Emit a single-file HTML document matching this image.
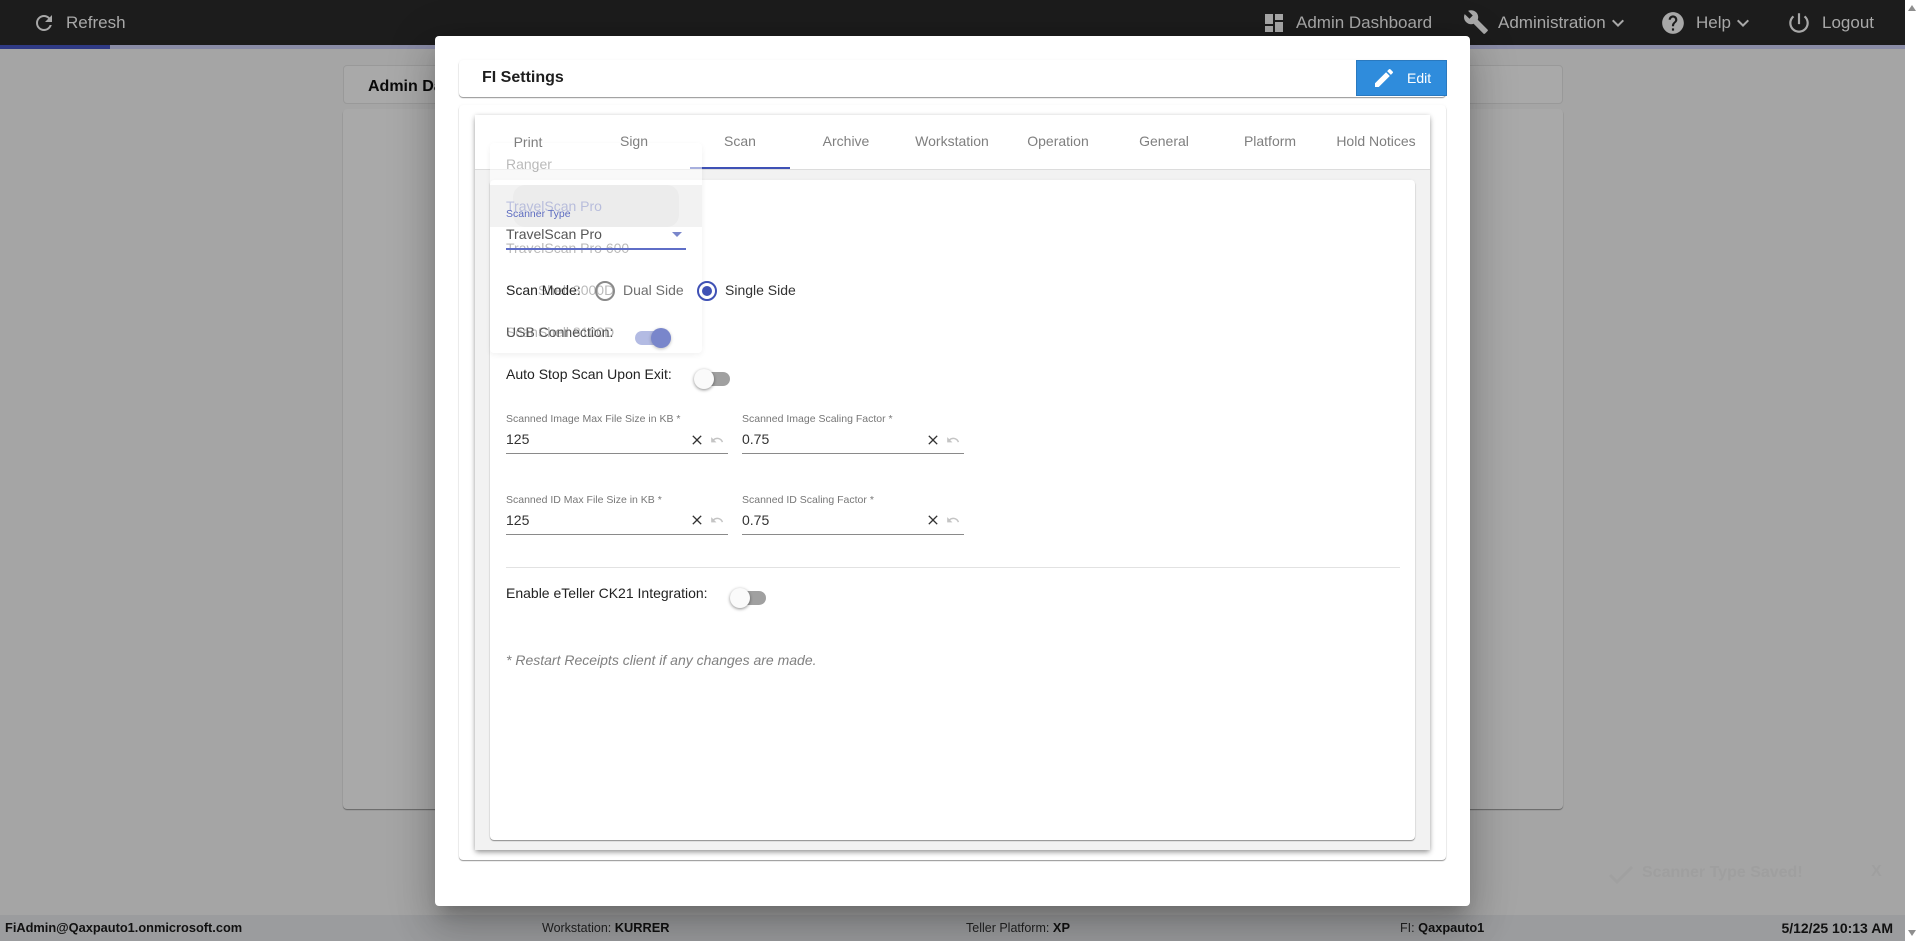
<!DOCTYPE html>
<html><head><meta charset="utf-8"><title>FI Settings</title>
<style>
html,body{margin:0;padding:0;width:1920px;height:941px;overflow:hidden;background:#fff;font-family:"Liberation Sans",Arial,sans-serif}
*{box-sizing:border-box}
.a{position:absolute}
.t{position:absolute;line-height:20px;white-space:nowrap;height:20px}
svg{position:absolute;display:block}
.nav{font-size:17px;color:#a8a8a8}
.tab{position:absolute;top:131px;width:106px;text-align:center;font-size:14px;line-height:20px;color:#7f7f7f}
.lab{font-size:10.5px;color:#777}
.val{font-size:14px;color:#333}
.line{position:absolute;height:1px;background:#8a8a8a;width:222px}
.st{font-size:12.8px;color:#111;font-weight:bold}
.st span{font-weight:normal;color:#222;font-size:12.5px}
.dd{font-size:14px;color:rgba(0,0,0,.28)}
</style></head>
<body>
<div class="a" style="left:0;top:0;width:1905px;height:941px;background:#a5a5a5;overflow:hidden">
  <div class="a" style="left:0;top:0;width:1905px;height:45px;background:#1c1c1c"></div>
  <div class="a" style="left:0;top:45px;width:1905px;height:4px;background:#8a8ca6"></div>
  <div class="a" style="left:0;top:45px;width:110px;height:4px;background:#2f3a85"></div>

  <svg style="left:32px;top:11px" width="24" height="24" viewBox="0 0 24 24" fill="#a8a8a8"><path d="M17.65 6.35C16.2 4.9 14.21 4 12 4c-4.42 0-7.99 3.58-7.99 8s3.57 8 7.99 8c3.73 0 6.84-2.55 7.73-6h-2.08c-.82 2.33-3.04 4-5.65 4-3.31 0-6-2.69-6-6s2.69-6 6-6c1.66 0 3.14.69 4.22 1.78L13 11h7V4l-2.35 2.35z"/></svg>
  <div class="t nav" style="left:66px;top:13px">Refresh</div>

  <svg style="left:1262px;top:11px" width="24" height="24" viewBox="0 0 24 24" fill="#a8a8a8"><path d="M3 13h8V3H3v10zm0 8h8v-6H3v6zm10 0h8V11h-8v10zm0-18v6h8V3h-8z"/></svg>
  <div class="t nav" style="left:1296px;top:13px">Admin Dashboard</div>
  <svg style="left:1463px;top:9px" width="26" height="26" viewBox="0 0 24 24" fill="#a8a8a8"><path d="M22.7 19l-9.1-9.1c.9-2.3.4-5-1.5-6.9-2-2-5-2.4-7.4-1.3L9 6 6 9 1.6 4.7C.4 7.1.9 10.1 2.9 12.1c1.9 1.9 4.6 2.4 6.9 1.5l9.1 9.1c.4.4 1 .4 1.4 0l2.3-2.3c.5-.4.5-1.1.1-1.4z"/></svg>
  <div class="t nav" style="left:1498px;top:13px">Administration</div>
  <svg style="left:1606px;top:10px" width="24" height="26" viewBox="0 0 24 24" fill="#a8a8a8"><path d="M7.41 8.59L12 13.17l4.59-4.58L18 10l-6 6-6-6z"/></svg>
  <svg style="left:1660px;top:10px" width="26" height="26" viewBox="0 0 24 24" fill="#a8a8a8"><path d="M12 2C6.48 2 2 6.48 2 12s4.48 10 10 10 10-4.48 10-10S17.52 2 12 2zm1 17h-2v-2h2v2zm2.07-7.75l-.9.92C13.45 12.9 13 13.5 13 15h-2v-.5c0-1.1.45-2.1 1.17-2.83l1.24-1.26c.37-.36.59-.86.59-1.41 0-1.1-.9-2-2-2s-2 .9-2 2H8c0-2.21 1.79-4 4-4s4 1.79 4 4c0 .88-.36 1.68-.93 2.25z"/></svg>
  <div class="t nav" style="left:1696px;top:13px">Help</div>
  <svg style="left:1731px;top:10px" width="24" height="26" viewBox="0 0 24 24" fill="#a8a8a8"><path d="M7.41 8.59L12 13.17l4.59-4.58L18 10l-6 6-6-6z"/></svg>
  <svg style="left:1786px;top:10px" width="26" height="26" viewBox="0 0 24 24" fill="#a8a8a8"><path d="M13 3h-2v10h2V3zm4.83 2.17l-1.42 1.42C17.99 7.86 19 9.81 19 12c0 3.87-3.13 7-7 7s-7-3.13-7-7c0-2.19 1.01-4.14 2.58-5.42L6.17 5.17C4.23 6.82 3 9.26 3 12c0 4.97 4.03 9 9 9s9-4.03 9-9c0-2.74-1.23-5.18-3.17-6.83z"/></svg>
  <div class="t nav" style="left:1822px;top:13px">Logout</div>

  <!-- background cards -->
  <div class="a" style="left:343px;top:65px;width:1220px;height:39px;background:#a9a9a9;border:1px solid #999;border-radius:4px"></div>
  <div class="t" style="left:368px;top:77px;font-size:16px;font-weight:bold;color:#0a0a0a">Admin Dashboard</div>
  <div class="a" style="left:343px;top:109px;width:1220px;height:700px;background:#a9a9a9;border-radius:4px;box-shadow:0 1px 1px rgba(0,0,0,.4)"></div>

  <!-- toast ghost -->
  <svg style="left:1608px;top:865px" width="26" height="20" viewBox="0 0 26 20" fill="none" stroke="#a0a0a0" stroke-width="3"><path d="M2 10l7 7L24 2"/></svg>
  <div class="t" style="left:1642px;top:863px;font-size:16px;font-weight:bold;color:#9f9f9f">Scanner Type Saved!</div>
  <div class="t" style="left:1871px;top:862px;font-size:16px;font-weight:bold;color:#9f9f9f">X</div>

  <!-- status bar -->
  <div class="a" style="left:0;top:915px;width:1905px;height:26px;background:#9b9c9e"></div>
  <div class="t st" style="left:5px;top:918px">FiAdmin@Qaxpauto1.onmicrosoft.com</div>
  <div class="t st" style="left:542px;top:918px"><span>Workstation:</span> KURRER</div>
  <div class="t st" style="left:966px;top:918px"><span>Teller Platform:</span> XP</div>
  <div class="t st" style="left:1400px;top:918px"><span>FI:</span> Qaxpauto1</div>
  <div class="t st" style="right:12px;top:918px;font-size:14px">5/12/25 10:13 AM</div>
</div>

<!-- scrollbar -->
<div class="a" style="left:1905px;top:0;width:15px;height:941px;background:#fff"></div>
<div class="a" style="left:1908px;top:5px;width:0;height:0;border-left:4.5px solid transparent;border-right:4.5px solid transparent;border-bottom:6px solid #8e8e8e"></div>
<div class="a" style="left:1908px;top:930px;width:0;height:0;border-left:4.5px solid transparent;border-right:4.5px solid transparent;border-top:6px solid #8e8e8e"></div>

<!-- modal -->
<div class="a" style="left:435px;top:36px;width:1035px;height:870px;background:#fff;border-radius:4px;box-shadow:0 11px 15px -7px rgba(0,0,0,.2),0 24px 38px 3px rgba(0,0,0,.14),0 9px 46px 8px rgba(0,0,0,.12)"></div>

<!-- header card -->
<div class="a" style="left:459px;top:60px;width:987px;height:37px;background:#fff;border-radius:4px;box-shadow:0 1px 1px rgba(0,0,0,.42),0 0 3px rgba(0,0,0,.04)"></div>
<div class="t" style="left:482px;top:68px;font-size:16px;font-weight:bold;color:#1e1e1e">FI Settings</div>
<div class="a" style="left:1356px;top:60px;width:91px;height:36px;background:#2f8cdc;border:1px solid #2a79bf"></div>
<svg style="left:1372px;top:66px" width="24" height="24" viewBox="0 0 24 24" fill="#fff"><path d="M3 17.25V21h3.75L17.81 9.94l-3.75-3.75L3 17.25zM20.71 7.04c.39-.39.39-1.02 0-1.41l-2.34-2.34c-.39-.39-1.02-.39-1.41 0l-1.83 1.83 3.75 3.75 1.83-1.83z"/></svg>
<div class="t" style="left:1407px;top:68px;font-size:14px;color:#fff">Edit</div>

<!-- outer card -->
<div class="a" style="left:459px;top:105px;width:987px;height:755px;background:#fff;border-radius:4px;box-shadow:0 1px 1px rgba(0,0,0,.42),0 0 3px rgba(0,0,0,.04)"></div>
<!-- tab card -->
<div class="a" style="left:475px;top:115px;width:955px;height:735px;background:#f2f2f2;box-shadow:0 3px 5px -1px rgba(0,0,0,.28),0 2px 6px rgba(0,0,0,.16),0 0 4px rgba(0,0,0,.08)"></div>
<div class="a" style="left:475px;top:115px;width:955px;height:55px;background:#fff;border-bottom:1px solid #dcdcdc"></div>
<div class="a" style="left:690px;top:167px;width:100px;height:2px;background:#3f51b5"></div>

<!-- content card -->
<div class="a" style="left:490px;top:180px;width:925px;height:660px;background:#fff;border-radius:4px;box-shadow:0 1px 1px rgba(0,0,0,.42),0 0 3px rgba(0,0,0,.04)"></div>

<!-- fading dropdown -->
<div class="a" style="left:490px;top:143px;width:212px;height:210px;background:rgba(255,255,255,.55);border-radius:4px;box-shadow:0 2px 6px rgba(0,0,0,.06)"></div>
<div class="a" style="left:490px;top:185px;width:212px;height:42px;background:rgba(0,0,0,.05)"></div>
<div class="a" style="left:513px;top:185px;width:166px;height:42px;background:rgba(0,0,0,.025);border-radius:12px"></div>
<div class="t dd" style="left:506px;top:154px">Ranger</div>
<div class="t dd" style="left:506px;top:196px;color:rgba(63,81,181,.3)">TravelScan Pro</div>
<div class="t dd" style="left:506px;top:238px">TravelScan Pro 600</div>
<div class="t dd" style="left:506px;top:280px">ScanShell 3000D</div>
<div class="t dd" style="left:506px;top:322px">ScanShell 8100D</div>

<!-- tabs -->
<div class="tab" style="left:475px;top:132px">Print</div>
<div class="tab" style="left:581px">Sign</div>
<div class="tab" style="left:687px">Scan</div>
<div class="tab" style="left:793px">Archive</div>
<div class="tab" style="left:899px">Workstation</div>
<div class="tab" style="left:1005px">Operation</div>
<div class="tab" style="left:1111px">General</div>
<div class="tab" style="left:1217px">Platform</div>
<div class="tab" style="left:1323px">Hold Notices</div>

<!-- form -->
<div class="t" style="left:506px;top:204px;font-size:10.5px;color:#5c6bc0">Scanner Type</div>
<div class="t val" style="left:506px;top:224px;color:#555">TravelScan Pro</div>
<div class="a" style="left:672px;top:232px;width:0;height:0;border-left:5px solid transparent;border-right:5px solid transparent;border-top:5px solid #7986cb"></div>
<div class="a" style="left:506px;top:248px;width:180px;height:2px;background:#5f6ec7"></div>

<div class="t" style="left:506px;top:280px;font-size:14px;color:#2a2a2a">Scan Mode:</div>
<div class="a" style="left:595px;top:281px;width:20px;height:20px;border:2px solid #8a8a8a;border-radius:50%"></div>
<div class="t" style="left:623px;top:280px;font-size:14px;color:#6f6f6f">Dual Side</div>
<div class="a" style="left:697px;top:281px;width:20px;height:20px;border:2px solid #3f51b5;border-radius:50%"></div>
<div class="a" style="left:702px;top:286px;width:10px;height:10px;background:#3f51b5;border-radius:50%"></div>
<div class="t" style="left:725px;top:280px;font-size:14px;color:#333">Single Side</div>

<div class="t" style="left:506px;top:322px;font-size:14px;color:#555">USB Connection:</div>
<div class="a" style="left:635px;top:331px;width:36px;height:14px;border-radius:7px;background:#b3bbe3"></div>
<div class="a" style="left:651px;top:328px;width:20px;height:20px;border-radius:50%;background:#7986cb;box-shadow:0 1px 3px rgba(0,0,0,.25)"></div>

<div class="t" style="left:506px;top:364px;font-size:14px;color:#222">Auto Stop Scan Upon Exit:</div>
<div class="a" style="left:696px;top:372px;width:34px;height:14px;border-radius:7px;background:#a0a0a0"></div>
<div class="a" style="left:694px;top:369px;width:20px;height:20px;border-radius:50%;background:#fafafa;box-shadow:0 1px 3px rgba(0,0,0,.45)"></div>

<!-- fields -->
<div class="t lab" style="left:506px;top:409px">Scanned Image Max File Size in KB *</div>
<div class="t val" style="left:506px;top:429px">125</div>
<div class="line" style="left:506px;top:453px"></div>
<svg style="left:689px;top:432px" width="16" height="16" viewBox="0 0 24 24" fill="#333"><path d="M19 6.41L17.59 5 12 10.59 6.41 5 5 6.41 10.59 12 5 17.59 6.41 19 12 13.41 17.59 19 19 17.59 13.41 12z"/></svg>
<svg style="left:710px;top:433px" width="14" height="14" viewBox="0 0 24 24" fill="#c4c4c4"><path d="M12.5 8c-2.65 0-5.05.99-6.9 2.6L2 7v9h9l-3.62-3.62c1.39-1.16 3.16-1.88 5.12-1.88 3.54 0 6.55 2.31 7.6 5.5l2.37-.78C21.08 11.03 17.15 8 12.5 8z"/></svg>

<div class="t lab" style="left:742px;top:409px">Scanned Image Scaling Factor *</div>
<div class="t val" style="left:742px;top:429px">0.75</div>
<div class="line" style="left:742px;top:453px"></div>
<svg style="left:925px;top:432px" width="16" height="16" viewBox="0 0 24 24" fill="#333"><path d="M19 6.41L17.59 5 12 10.59 6.41 5 5 6.41 10.59 12 5 17.59 6.41 19 12 13.41 17.59 19 19 17.59 13.41 12z"/></svg>
<svg style="left:946px;top:433px" width="14" height="14" viewBox="0 0 24 24" fill="#c4c4c4"><path d="M12.5 8c-2.65 0-5.05.99-6.9 2.6L2 7v9h9l-3.62-3.62c1.39-1.16 3.16-1.88 5.12-1.88 3.54 0 6.55 2.31 7.6 5.5l2.37-.78C21.08 11.03 17.15 8 12.5 8z"/></svg>

<div class="t lab" style="left:506px;top:490px">Scanned ID Max File Size in KB *</div>
<div class="t val" style="left:506px;top:510px">125</div>
<div class="line" style="left:506px;top:534px"></div>
<svg style="left:689px;top:512px" width="16" height="16" viewBox="0 0 24 24" fill="#333"><path d="M19 6.41L17.59 5 12 10.59 6.41 5 5 6.41 10.59 12 5 17.59 6.41 19 12 13.41 17.59 19 19 17.59 13.41 12z"/></svg>
<svg style="left:710px;top:513px" width="14" height="14" viewBox="0 0 24 24" fill="#c4c4c4"><path d="M12.5 8c-2.65 0-5.05.99-6.9 2.6L2 7v9h9l-3.62-3.62c1.39-1.16 3.16-1.88 5.12-1.88 3.54 0 6.55 2.31 7.6 5.5l2.37-.78C21.08 11.03 17.15 8 12.5 8z"/></svg>

<div class="t lab" style="left:742px;top:490px">Scanned ID Scaling Factor *</div>
<div class="t val" style="left:742px;top:510px">0.75</div>
<div class="line" style="left:742px;top:534px"></div>
<svg style="left:925px;top:512px" width="16" height="16" viewBox="0 0 24 24" fill="#333"><path d="M19 6.41L17.59 5 12 10.59 6.41 5 5 6.41 10.59 12 5 17.59 6.41 19 12 13.41 17.59 19 19 17.59 13.41 12z"/></svg>
<svg style="left:946px;top:513px" width="14" height="14" viewBox="0 0 24 24" fill="#c4c4c4"><path d="M12.5 8c-2.65 0-5.05.99-6.9 2.6L2 7v9h9l-3.62-3.62c1.39-1.16 3.16-1.88 5.12-1.88 3.54 0 6.55 2.31 7.6 5.5l2.37-.78C21.08 11.03 17.15 8 12.5 8z"/></svg>

<div class="a" style="left:506px;top:567px;width:894px;height:1px;background:#e2e2e2"></div>
<div class="t" style="left:506px;top:583px;font-size:14px;color:#222">Enable eTeller CK21 Integration:</div>
<div class="a" style="left:732px;top:591px;width:34px;height:14px;border-radius:7px;background:#a0a0a0"></div>
<div class="a" style="left:730px;top:588px;width:20px;height:20px;border-radius:50%;background:#fafafa;box-shadow:0 1px 3px rgba(0,0,0,.45)"></div>
<div class="t" style="left:506px;top:650px;font-size:14px;font-style:italic;color:#808080">* Restart Receipts client if any changes are made.</div>
</body></html>
